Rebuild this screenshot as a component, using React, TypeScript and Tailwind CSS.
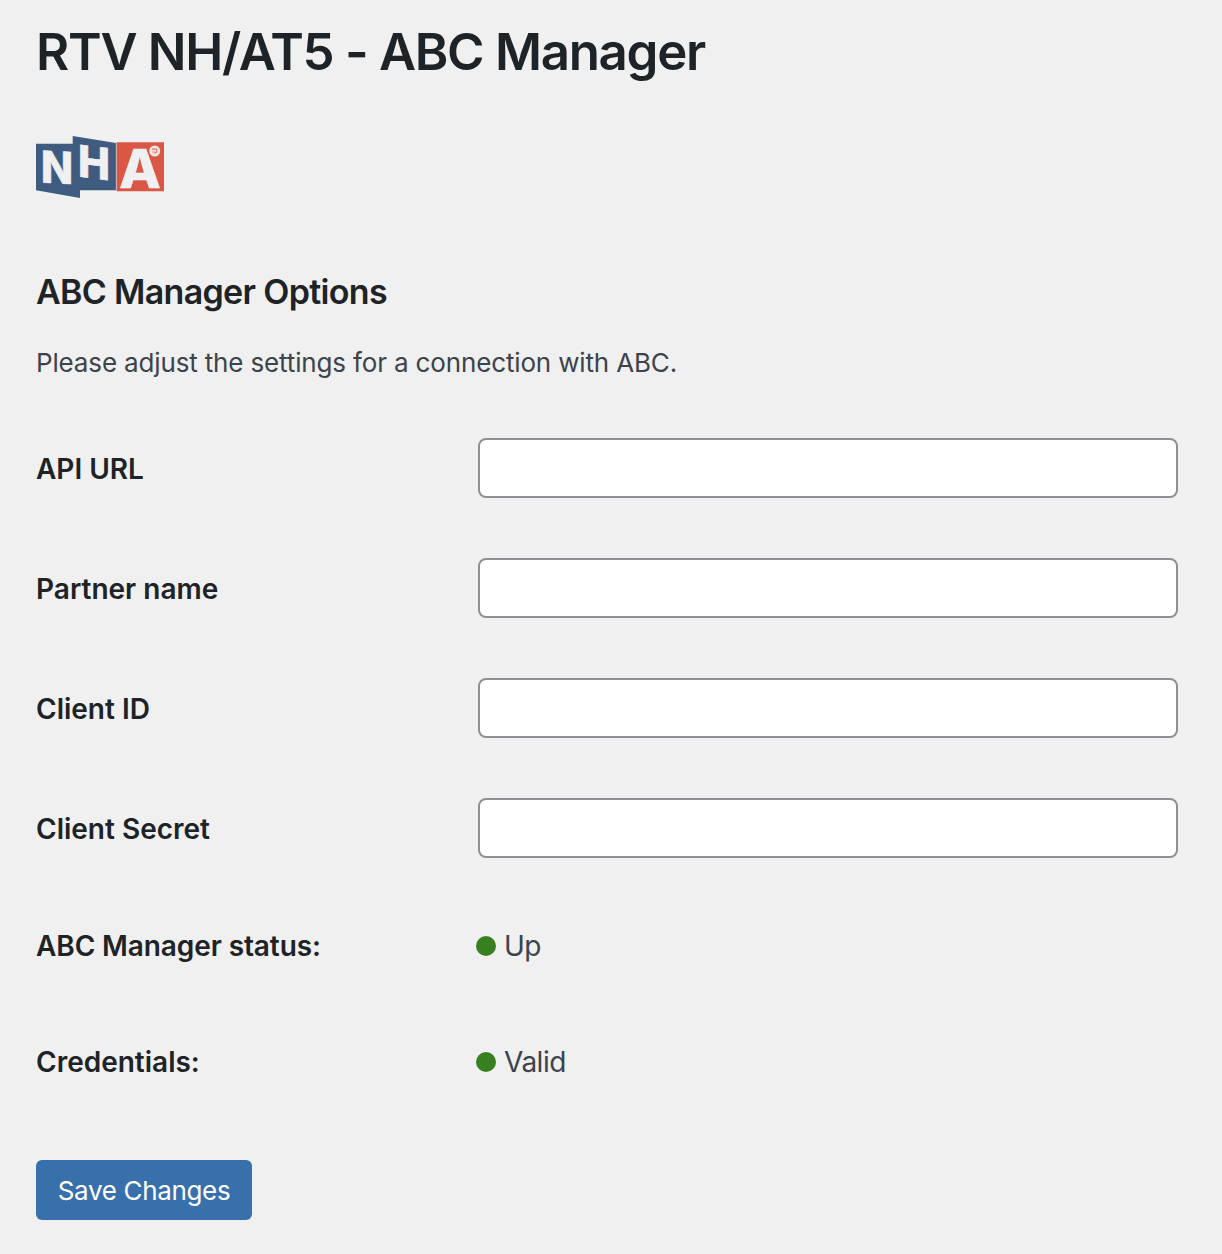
const fields = ['API URL', 'Partner name', 'Client ID', 'Client Secret'];

const statuses = [
  { label: 'ABC Manager status:', value: 'Up', labelClass: 'tracking-[-0.1px]' },
  { label: 'Credentials:', value: 'Valid', labelClass: 'tracking-normal' },
];

function Logo() {
  return (
    <svg className="block h-16 w-32 overflow-visible" viewBox="0 0 128 64" role="img" aria-label="NHA">
      <path d="M0 8.7H36.7V1L80 8V55.3H44V63L0 55.3Z" fill="#3f5c80" />
      <path d="M80.8 7.3H128V56.3H80.8Z" fill="#d95744" />
      <path d="M80.3 7.5V56" stroke="#c8a6a6" strokeWidth="1" />
      <g fill="#f0f0f1" stroke="#f0f0f1" strokeWidth="0.6" fontFamily="Inter, sans-serif" fontWeight="800">
        <text transform="translate(5 47.4) skewY(3)" fontSize="44" textLength="32" lengthAdjust="spacingAndGlyphs">N</text>
        <text transform="translate(42 41.4) skewY(7)" fontSize="44" textLength="32" lengthAdjust="spacingAndGlyphs">H</text>
        <text x="83" y="53.4" fontSize="54" strokeWidth="0.3" textLength="42" lengthAdjust="spacingAndGlyphs">A</text>
      </g>
      <circle cx="118.7" cy="16" r="5.5" fill="#f0e4e2" />
      <path d="M116 14.2H120.6Q121.5 17.6 118.5 18M116.5 17H118.5" fill="none" stroke="#dd7769" strokeWidth="1.2" />
    </svg>
  );
}

export default function App() {
  return (
    <main className="h-[1254px] w-[1222px] overflow-hidden bg-[#f0f0f0] px-9 pt-5 font-['Inter',sans-serif] text-[#1d2327]">
      <h1 className="h-[115px] text-[51px] leading-[64px] font-semibold tracking-[-1.28px] whitespace-nowrap">
        RTV NH/AT5 - ABC Manager
      </h1>
      <Logo />
      <h2 className="mt-[71px] h-[44px] text-[34px] leading-[44px] font-semibold tracking-[-0.68px] whitespace-nowrap">
        ABC Manager Options
      </h2>
      <p className="mt-[29px] h-[40px] text-[26px] leading-[40px] tracking-[-0.15px] whitespace-nowrap text-[#3c434a]">
        Please adjust the settings for a connection with ABC.
      </p>
      <form className="mt-[55px]" onSubmit={(event) => event.preventDefault()}>
        <div className="flex flex-col gap-[60px]">
          {fields.map((label) => (
            <label key={label} className="flex h-[60px] items-center">
              <span className="w-[442px] pt-0.5 text-[28px] leading-9 font-semibold">{label}</span>
              <input
                type="text"
                className="h-[60px] w-[700px] rounded-lg border-2 border-[#8c8f94] bg-white px-4 text-[28px] outline-none"
              />
            </label>
          ))}
        </div>
        <dl className="mt-[70px] flex flex-col gap-[80px]">
          {statuses.map(({ label, value, labelClass }) => (
            <div key={label} className="flex h-9 items-center text-[28px] leading-9">
              <dt className={`w-[440px] font-semibold ${labelClass}`}>{label}</dt>
              <dd className="flex items-center gap-2 tracking-[-0.5px] text-[#3c434a]">
                <span className="size-5 rounded-full bg-[#38801f]" />
                {value}
              </dd>
            </div>
          ))}
        </dl>
        <button
          type="submit"
          className="mt-[80px] flex h-[60px] w-[216px] items-center justify-center rounded-md bg-[#3870ac] text-[26px] tracking-[-0.33px] whitespace-nowrap text-white"
        >
          Save Changes
        </button>
      </form>
    </main>
  );
}
